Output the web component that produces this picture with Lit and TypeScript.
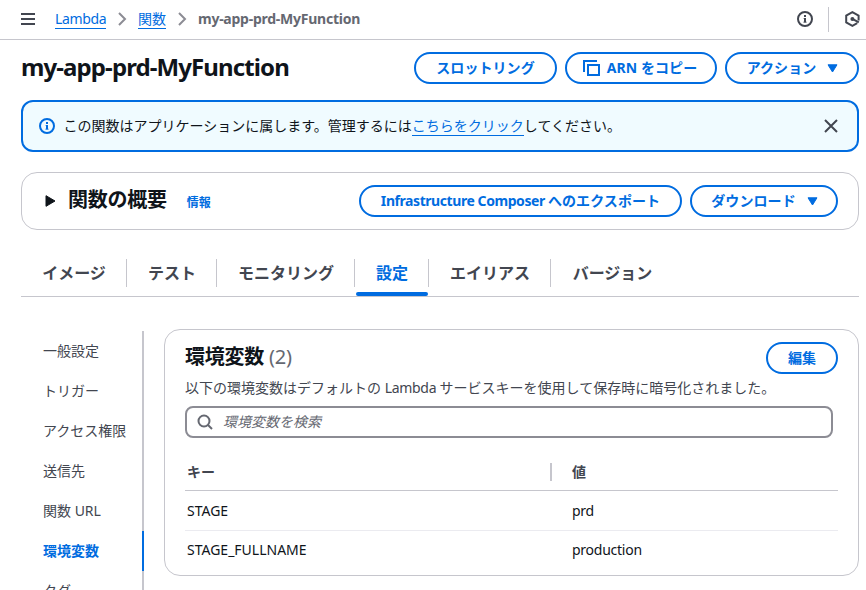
import { LitElement, html, css } from "lit";
import { customElement, property } from "lit/decorators.js";
import { classMap } from "lit/directives/class-map.js";

const caret = html`<svg class="caret" width="11" height="9" viewBox="0 0 11 9"><path d="M1 .8h9L5.5 8z" fill="currentColor" stroke="currentColor" stroke-width="1" stroke-linejoin="round"/></svg>`;
const info = html`<svg width="16" height="16" viewBox="0 0 16 16" fill="none" stroke="currentColor" stroke-width="2"><circle cx="8" cy="8" r="7"/><path d="M8 11V7M8 6V4"/><path d="M6.7 7.5H8M6.5 11.2h3" stroke-width="1"/></svg>`;
const chevron = html`<svg class="chevron" width="9" height="14" viewBox="0 0 9 14" fill="none" stroke="#8c8c94" stroke-width="2"><path d="M1 1l6 6-6 6"/></svg>`;

@customElement("pill-button")
export class PillButton extends LitElement {
  static styles = css`
    :host { display: block; }
    .pill {
      box-sizing: border-box; width: 100%; height: 32px; padding: 0; margin: 0;
      display: flex; align-items: center; justify-content: center;
      border: 2px solid #006ce0; border-radius: 20px; background: #fff; color: #006ce0;
      font: 700 14px/20px "Noto Sans", "Noto Sans CJK JP", sans-serif;
      letter-spacing: 0.07px; white-space: nowrap;
    }
  `;
  render() {
    return html`<button class="pill"><slot></slot></button>`;
  }
}

@customElement("side-nav")
export class SideNav extends LitElement {
  @property({ attribute: false }) items: string[] = [];
  @property() current = "";
  static styles = css`
    :host { display: block; width: 123px; box-sizing: border-box; }
    .item {
      height: 40px; box-sizing: border-box; padding-left: 22px;
      border-right: 2px solid #c6c6cd; color: #424650;
      display: flex; align-items: center; white-space: nowrap;
    }
    .active { border-right-color: #006ce0; color: #006ce0; font-weight: 700; }
  `;
  render() {
    return this.items.map(
      (i) => html`<div class=${classMap({ item: true, active: i === this.current })}>${i}</div>`
    );
  }
}

@customElement("app-root")
export class AppRoot extends LitElement {
  static styles = css`
    :host {
      display: block; height: 590px; overflow: hidden; background: #fff; color: #0f141a;
      font: 400 14px/20px "Noto Sans", "Noto Sans CJK JP", sans-serif;
    }
    svg { display: block; flex: none; }
    .top {
      height: 40px; box-sizing: border-box; border-bottom: 1px solid #c6c6cd;
      display: flex; align-items: center; padding-left: 21px; color: #424650;
    }
    .menu { margin-bottom: 1px; }
    .crumbs { display: flex; align-items: center; margin: 0 0 1px 20px; }
    .chevron { margin: 0 12px 0 12px; }
    .link { color: #006ce0; border-bottom: 1px solid #006ce0; line-height: 19px; }
    .lambda { width: 51px; letter-spacing: -0.34px; white-space: nowrap; }
    .crumb { margin-left: -1px; }
    .here { color: #656871; font-weight: 700; letter-spacing: -0.25px; }
    .tight { letter-spacing: -0.3px; }
    .tighter { letter-spacing: -0.43px; white-space: pre; }
    .tools { margin: 0 0 1px auto; display: flex; align-items: center; }
    .sep { width: 1px; height: 25px; background: #c6c6cd; margin: 0 16px 0 15px; }
    .body { padding: 12px 7px 0 21px; }
    .title-row { display: flex; align-items: center; height: 32px; gap: 8px; }
    .title { margin: -2px auto 0 0; font-size: 24px; line-height: 30px; letter-spacing: -0.9px; }
    .throttle { width: 143px; }
    .arn { width: 152px; }
    .actions { width: 134px; }
    .copy { margin: 0 7px 0 -2px; }
    .caret { margin: 0 -1px 0 11px; }
    .alert {
      margin-top: 16px; height: 52px; box-sizing: border-box; padding: 0 19px 0 16px;
      border: 2px solid #006ce0; border-radius: 12px; background: #f0fbff;
      display: flex; align-items: center;
    }
    .alert-icon { color: #006ce0; margin-right: 8.5px; }
    .close { margin-left: auto; }
    .card { border: 1px solid #c6c6cd; border-radius: 16px; box-sizing: border-box; }
    .overview {
      margin-top: 20px; height: 58px; padding: 0 20px 0 23px;
      display: flex; align-items: center; gap: 8px;
    }
    .h2 { margin: 0; font-size: 20px; line-height: 24px; letter-spacing: -0.25px; font-weight: 700; }
    .overview .h2 { margin: -2px 0 0 4px; }
    .more { color: #006ce0; font-size: 12px; font-weight: 700; margin: 3px auto 0 12px; }
    .export { width: 323px; }
    .download { width: 148px; }
    .tabs {
      margin-top: 23px; height: 44px; box-sizing: border-box; border-bottom: 1px solid #c6c6cd;
      display: flex; align-items: flex-start; color: #424650; font-size: 16px; font-weight: 700;
    }
    .tab {
      position: relative; height: 28px; margin-top: 6px; box-sizing: border-box;
      border-right: 1px solid #c6c6cd; padding: 0 20px 0 21px; white-space: nowrap;
      display: flex; align-items: center; justify-content: center;
    }
    .tab:last-child { border-right: none; }
    .t0 { width: 106px; } .t1 { width: 90px; } .t2 { width: 138px; }
    .t3 { width: 74px; color: #006ce0; } .t4 { width: 122px; } .t5 { width: 122px; }
    .t3::after {
      content: ""; position: absolute; left: 1px; right: 0; bottom: -9px; height: 4px;
      border-radius: 2px; background: #006ce0;
    }
    .columns { display: flex; align-items: flex-start; }
    .nav { margin-top: 34px; }
    .panel { margin: 32px 0 0 20px; flex: 1; height: 247px; padding: 12px 20px 0 20px; }
    .panel-head { display: flex; justify-content: space-between; height: 32px; }
    .panel-head .h2 { margin-top: 3px; }
    .count { color: #656871; font-weight: 400; }
    .edit { width: 72px; }
    .desc { margin-top: 4px; color: #424650; white-space: nowrap; }
    .search {
      margin: 8px 5px 0 0; height: 32px; box-sizing: border-box; border: 2px solid #8c8c94;
      border-radius: 8px; display: flex; align-items: center; padding-left: 10px; gap: 10px;
      color: #656871; font-style: italic;
    }
    .row { display: grid; grid-template-columns: 365px 1fr; align-items: center; box-sizing: border-box; }
    .cell { padding-left: 2px; }
    .value { padding-left: 22px; }
    .head { margin-top: 15px; height: 38px; border-bottom: 1px solid #c6c6cd; color: #424650; font-weight: 700; }
    .head .value { border-left: 2px solid #c6c6cd; line-height: 18px; padding-left: 20px; }
    .data { height: 40px; border-bottom: 1px solid #ebebf0; }
    .data .value { letter-spacing: -0.25px; }
    .data:last-child { height: 38px; border: none; }
  `;

  private tabs = ["イメージ", "テスト", "モニタリング", "設定", "エイリアス", "バージョン"];
  private nav = ["一般設定", "トリガー", "アクセス権限", "送信先", "関数 URL", "環境変数", "タグ"];
  private vars = [["STAGE", "prd"], ["STAGE_FULLNAME", "production"]];

  render() {
    return html`
      <header class="top">
        <svg class="menu" width="14" height="12" viewBox="0 0 14 12" fill="currentColor"><path d="M0 0h14v2H0zM0 5h14v2H0zM0 10h14v2H0z"/></svg>
        <nav class="crumbs">
          <span class="link lambda">Lambda</span>${chevron}
          <span class="link crumb">関数</span>${chevron}
          <span class="here crumb">my-app-prd-MyFunction</span>
        </nav>
        <div class="tools">
          ${info}
          <span class="sep"></span>
          <svg width="21" height="16" viewBox="0 0 21 16" fill="none" stroke="currentColor" stroke-width="2"><path d="M13.6 9.4V4.6L7.4 1.2 1.2 4.6v6.8l6.2 3.4 4.8-2.6"/><circle cx="7.4" cy="8" r="2" fill="currentColor" stroke="none"/><path d="M7.4 7.8l6.4 3.6"/></svg>
        </div>
      </header>
      <main class="body">
        <div class="title-row">
          <h1 class="title">my-app-prd-MyFunction</h1>
          <pill-button class="throttle">スロットリング</pill-button>
          <pill-button class="arn"><svg class="copy" width="17" height="16" viewBox="0 0 17 16" fill="none" stroke="currentColor" stroke-width="2"><path d="M1 12V1h13"/><path d="M5 5h11v10H5z"/></svg>ARN をコピー</pill-button>
          <pill-button class="actions">アクション${caret}</pill-button>
        </div>
        <section class="alert">
          <span class="alert-icon">${info}</span>
          <span class="alert-text">この関数はアプリケーションに属します。管理するには<span class="link">こちらをクリック</span>してください。</span>
          <svg class="close" width="14" height="14" viewBox="0 0 14 14" fill="none" stroke="#424650" stroke-width="2"><path d="M1 1l12 12M13 1L1 13"/></svg>
        </section>
        <section class="card overview">
          <svg width="11" height="12" viewBox="0 0 11 12"><path d="M1 .7v10.6l9-5.3z" fill="#0f141a" stroke="#0f141a" stroke-linejoin="round"/></svg>
          <h2 class="h2">関数の概要</h2>
          <span class="more">情報</span>
          <pill-button class="export"><span class="tighter">Infrastructure Composer </span>へのエクスポート</pill-button>
          <pill-button class="download">ダウンロード${caret}</pill-button>
        </section>
        <div class="tabs">${this.tabs.map((t, i) => html`<div class="tab t${i}">${t}</div>`)}</div>
        <div class="columns">
          <side-nav class="nav" .items=${this.nav} current="環境変数"></side-nav>
          <section class="card panel">
            <div class="panel-head">
              <h2 class="h2">環境変数 <span class="count">(2)</span></h2>
              <pill-button class="edit">編集</pill-button>
            </div>
            <div class="desc">以下の環境変数はデフォルトの <span class="tight">Lambda </span>サービスキーを使用して保存時に暗号化されました。</div>
            <div class="search">
              <svg width="16" height="16" viewBox="0 0 16 16" fill="none" stroke="currentColor" stroke-width="2"><circle cx="7" cy="7" r="5.5"/><path d="M11 11l4 4"/></svg>
              <span>環境変数を検索</span>
            </div>
            <div class="row head"><div class="cell">キー</div><div class="value">値</div></div>
            ${this.vars.map(([k, v]) => html`<div class="row data"><div class="cell">${k}</div><div class="value">${v}</div></div>`)}
          </section>
        </div>
      </main>
    `;
  }
}
